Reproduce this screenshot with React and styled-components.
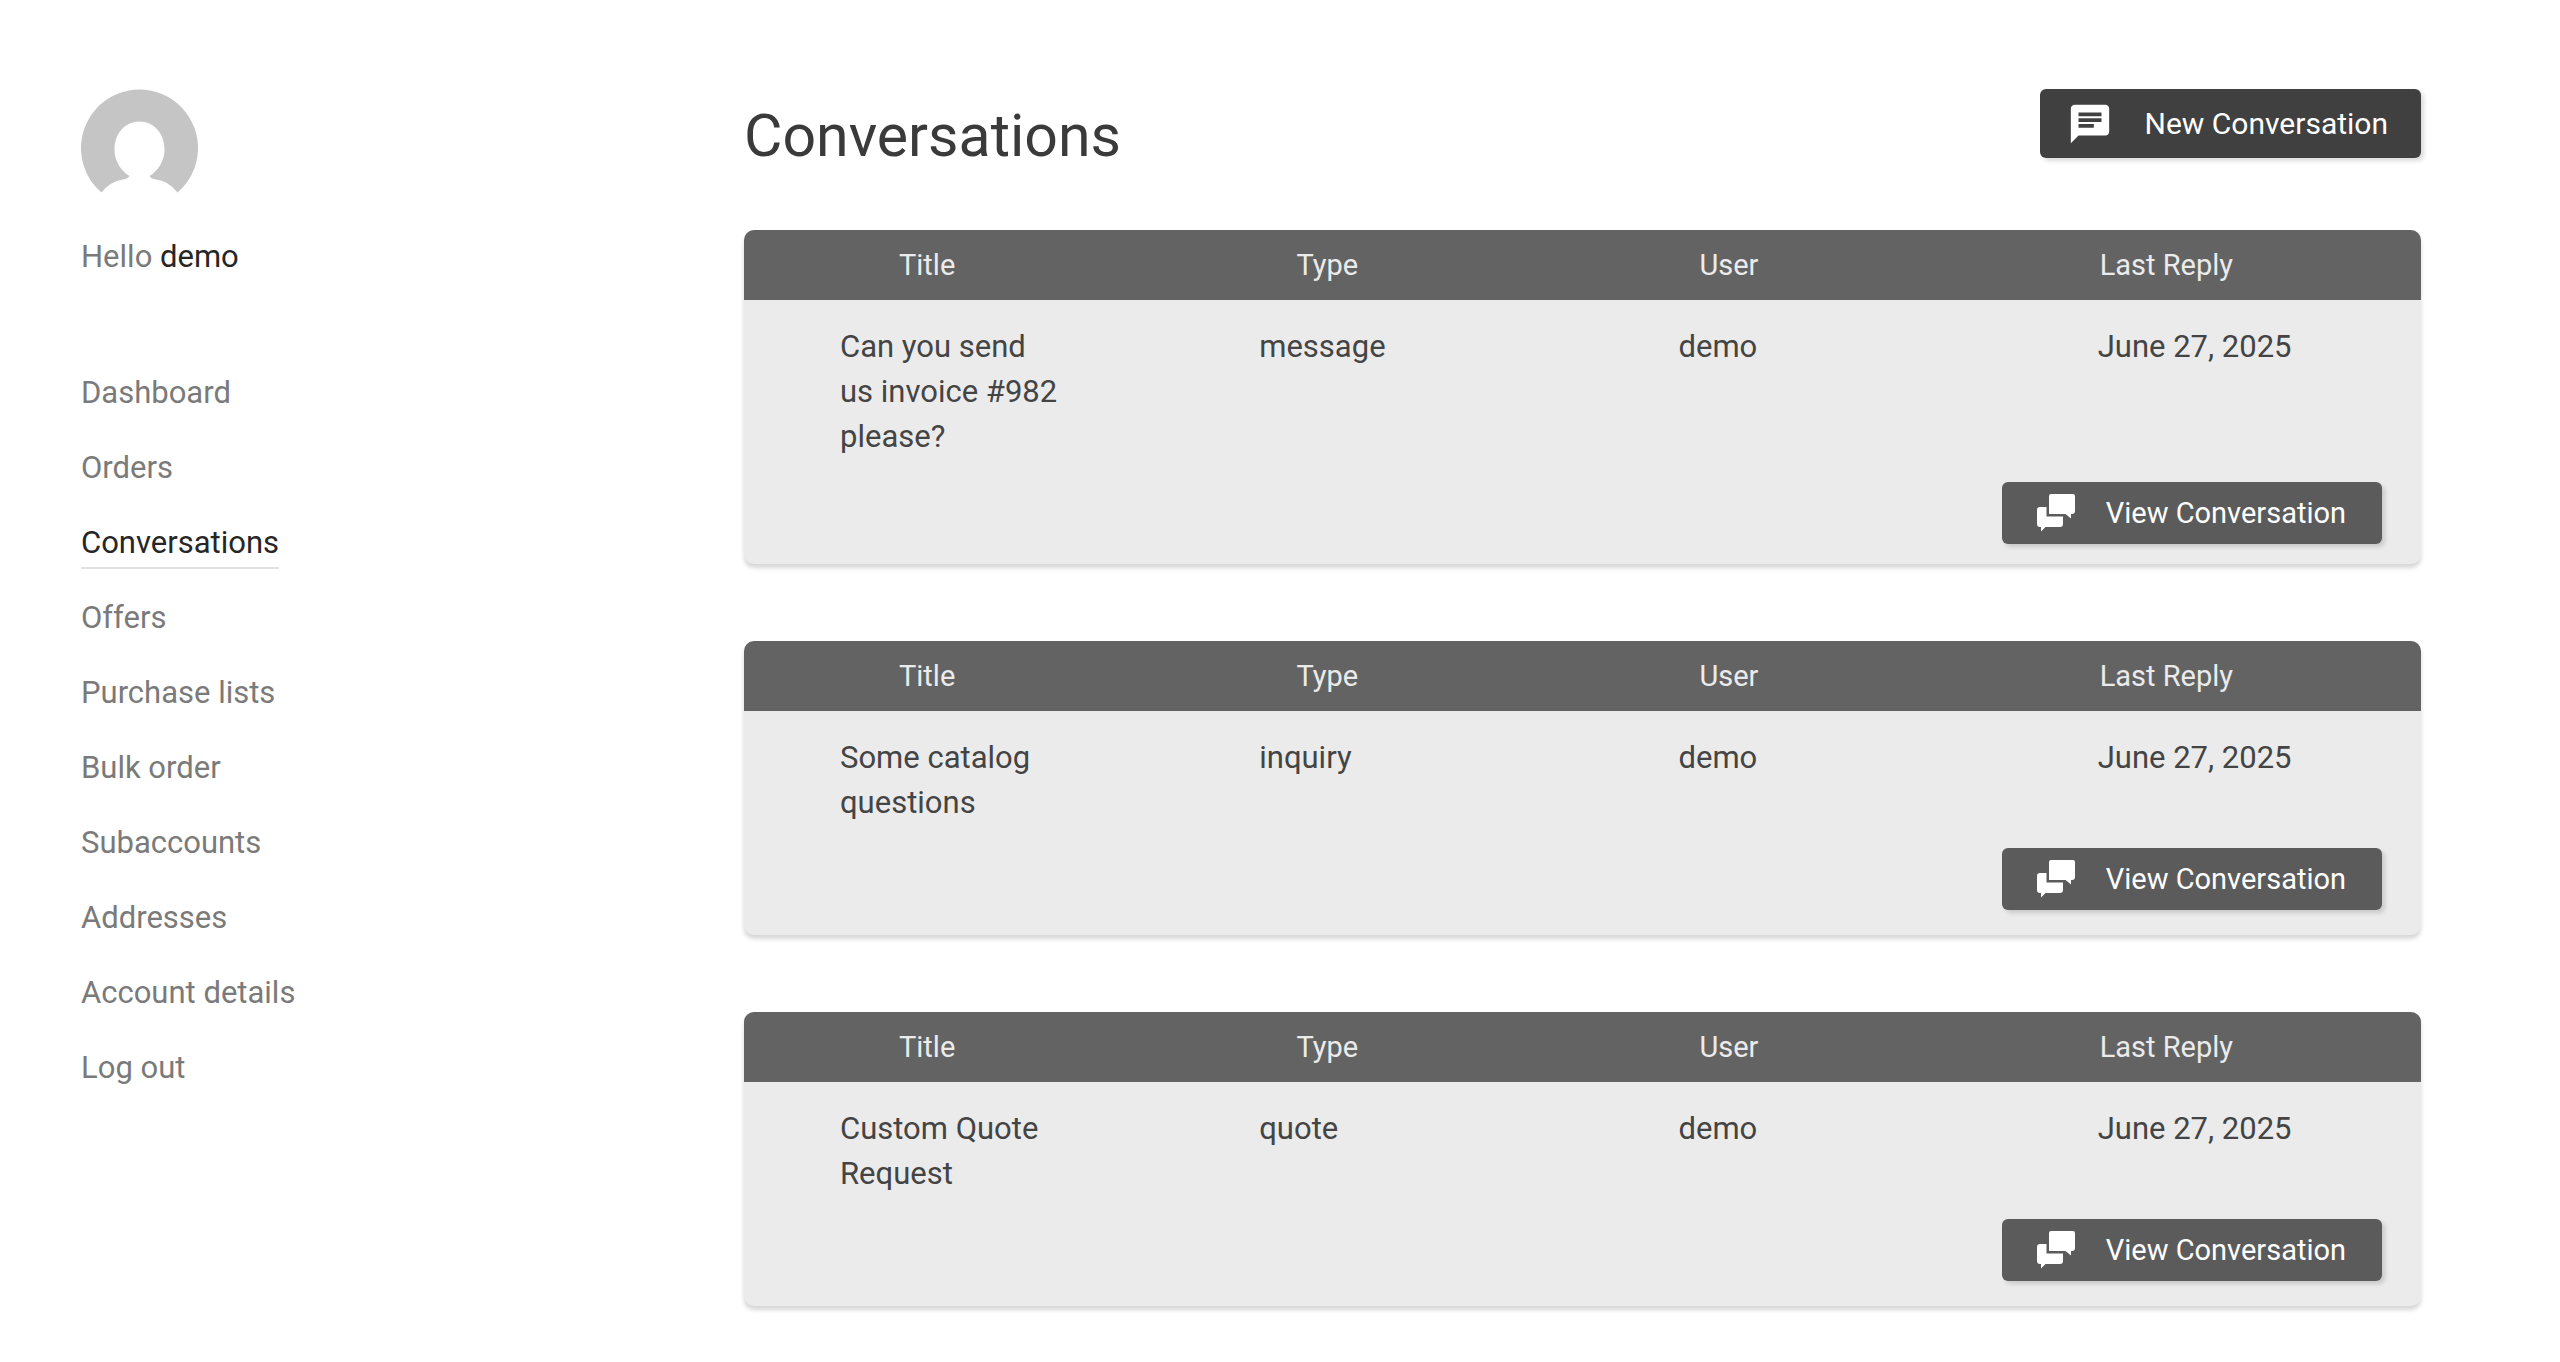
import styled, { createGlobalStyle } from 'styled-components';

const menu = [
  'Dashboard',
  'Orders',
  'Conversations',
  'Offers',
  'Purchase lists',
  'Bulk order',
  'Subaccounts',
  'Addresses',
  'Account details',
  'Log out',
];

const conversations = [
  { id: 982, title: 'Can you send us invoice #982 please?', type: 'message', user: 'demo', lastReply: 'June 27, 2025' },
  { id: 981, title: 'Some catalog questions', type: 'inquiry', user: 'demo', lastReply: 'June 27, 2025' },
  { id: 980, title: 'Custom Quote Request', type: 'quote', user: 'demo', lastReply: 'June 27, 2025' },
];

function ChatIcon() {
  return (
    <svg width="46" height="46" viewBox="0 0 24 24" fill="currentColor" aria-hidden="true">
      <path d="M20 2H4c-1.1 0-1.99.9-1.99 2L2 22l4-4h14c1.1 0 2-.9 2-2V4c0-1.1-.9-2-2-2zM6 9h12v2H6V9zm8 5H6v-2h8v2zm4-6H6V6h12v2z" />
    </svg>
  );
}

function BubblesIcon() {
  return (
    <svg width="38" height="38" viewBox="0 0 38 38" fill="currentColor" aria-hidden="true">
      <path d="M14 0h22a2 2 0 0 1 2 2v15a3 3 0 0 1-3 3h-1v4.500L28.500 20H12V2a2 2 0 0 1 2-2z" />
      <path d="M3 13h6.500v9.500H26V30a3 3 0 0 1-3 3H8.500L4 37.500V33H3a3 3 0 0 1-3-3V16a3 3 0 0 1 3-3z" />
    </svg>
  );
}

function Avatar() {
  return (
    <svg width="117" height="117" viewBox="0 0 117 117" role="img" aria-label="demo">
      <path
        fill="#c5c5c5"
        d="M20.500 103.500A58.500 58.500 0 1 1 96.500 103.500Q87 91.500 75 90.500Q70 89.500 68.500 87C77 82 83.500 72 83.500 60.500C83.500 44 72.500 32.500 58.500 32.500C44.500 32.500 33.500 44 33.500 60.500C33.500 72 40 82 48.500 87Q47 89.500 42 90.500Q29 92.500 20.500 103.500Z"
      />
    </svg>
  );
}

function ConversationCard({ conversation }) {
  return (
    <Card>
      <Table>
        <thead>
          <HeadRow>
            <th scope="col">Title</th>
            <th scope="col">Type</th>
            <th scope="col">User</th>
            <th scope="col">Last Reply</th>
          </HeadRow>
        </thead>
        <tbody>
          <BodyRow>
            <td>{conversation.title}</td>
            <td>{conversation.type}</td>
            <td>{conversation.user}</td>
            <td>{conversation.lastReply}</td>
          </BodyRow>
        </tbody>
      </Table>
      <CardFooter>
        <ViewButton type="button">
          <BubblesIcon />
          View Conversation
        </ViewButton>
      </CardFooter>
    </Card>
  );
}

export default function App() {
  return (
    <>
      <GlobalStyle />
      <Page>
        <Sidebar>
          <Avatar />
          <Greeting>Hello <strong>demo</strong></Greeting>
          <Menu>
            {menu.map((item) => (
              <li key={item}>
                <MenuLink href="#" $active={item === 'Conversations'}>{item}</MenuLink>
              </li>
            ))}
          </Menu>
        </Sidebar>
        <Content>
          <Header>
            <Heading>Conversations</Heading>
            <NewButton type="button">
              <ChatIcon />
              New Conversation
            </NewButton>
          </Header>
          {conversations.map((conversation) => (
            <ConversationCard key={conversation.id} conversation={conversation} />
          ))}
        </Content>
      </Page>
    </>
  );
}



//============= Styled Components =============
const GlobalStyle = createGlobalStyle`
  * {
    box-sizing: border-box;
  }
  body {
    margin: 0;
    background: #fff;
    color: #7a7a7a;
    font-family: Roboto, sans-serif;
    font-size: 31px;
    line-height: 45px;
  }
`;

const Page = styled.div`
  display: flex;
  padding: 89px 139px 0 81px;
`;

const Sidebar = styled.aside`
  flex: 0 0 663px;

  svg {
    display: block;
  }
`;

const Greeting = styled.p`
  margin: 28px 0 0;

  strong {
    color: #262626;
    font-weight: 400;
  }
`;

const Menu = styled.ul`
  display: flex;
  flex-direction: column;
  gap: 30px;
  margin: 91px 0 0;
  padding: 0;
  list-style: none;

  li {
    height: 45px;
  }
`;

const MenuLink = styled.a`
  display: inline-block;
  padding-bottom: 2px;
  border-bottom: 2px solid ${({ $active }) => ($active ? '#e2e2e2' : 'transparent')};
  color: ${({ $active }) => ($active ? '#262626' : '#7a7a7a')};
  text-decoration: none;
`;

const Content = styled.main`
  flex: 1;
  min-width: 0;
`;

const Header = styled.header`
  display: flex;
  justify-content: space-between;
  align-items: flex-start;
  height: 141px;
`;

const Heading = styled.h1`
  margin: 12px 0 0;
  color: #3a3a3a;
  font-size: 59px;
  font-weight: 400;
  line-height: 70px;
`;

const Button = styled.button`
  display: flex;
  align-items: center;
  gap: 31px;
  border: none;
  border-radius: 6px;
  color: #fff;
  font-family: inherit;
  box-shadow: 3px 3px 4px rgba(0, 0, 0, 0.14);
  cursor: pointer;
`;

const NewButton = styled(Button)`
  height: 69px;
  padding: 0 33px 0 27px;
  background: #404040;
  font-size: 30px;
`;

const ViewButton = styled(Button)`
  height: 62px;
  padding: 0 36px 0 35px;
  background: #5b5b5b;
  font-size: 29px;
`;

const Card = styled.section`
  min-height: 294px;
  margin-bottom: 77px;
  border-radius: 10px;
  background: #ebebeb;
  box-shadow: 0 4px 4px rgba(0, 0, 0, 0.16);
  overflow: hidden;
`;

const Table = styled.table`
  display: block;

  thead,
  tbody {
    display: block;
  }
`;

const HeadRow = styled.tr`
  display: flex;
  justify-content: space-between;
  align-items: center;
  height: 70px;
  padding: 0 188px 0 155px;
  background: #636363;
  color: #ebebeb;
  font-size: 29px;

  th {
    padding: 0;
    font-weight: 400;
  }
`;

const BodyRow = styled.tr`
  display: grid;
  grid-template-columns: repeat(4, 1fr);
  padding-top: 24px;
  color: #444;

  td {
    padding: 0 100px 0 96px;
  }

  td:last-child {
    padding-right: 0;
  }
`;

const CardFooter = styled.div`
  display: flex;
  justify-content: flex-end;
  padding: 23px 39px 20px;
`;
